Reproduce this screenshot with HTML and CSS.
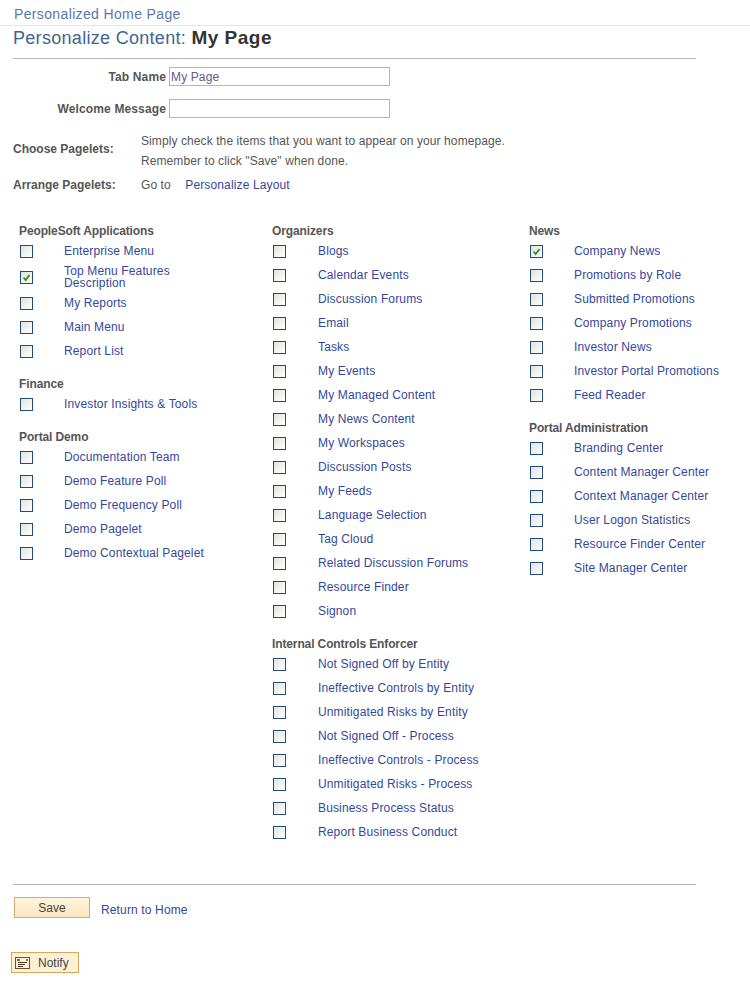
FILE: index.html
```html
<!DOCTYPE html>
<html lang="en">
<head>
    <meta charset="UTF-8">
    <title>Personalize Content</title>
    <link rel="stylesheet" href="styles.css">
</head>
<body>
    <div class="page-bar">Personalized Home Page</div>
    <div class="content">
        <h1 class="title">Personalize Content: <b>My Page</b></h1>
        <hr class="rule rule-top">

        <div class="field field-first">
            <label class="field-label">Tab Name</label>
            <input class="field-input" type="text" value="My Page">
        </div>
        <div class="field">
            <label class="field-label">Welcome Message</label>
            <input class="field-input" type="text">
        </div>

        <div class="info info-choose">
            <div class="info-label">Choose Pagelets:</div>
            <div class="info-text">
                <div>Simply check the items that you want to appear on your homepage.</div>
                <div>Remember to click "Save" when done.</div>
            </div>
        </div>
        <div class="info info-arrange">
            <div class="info-label">Arrange Pagelets:</div>
            <div class="info-text">Go to <a class="link goto-link" href="#">Personalize Layout</a></div>
        </div>
    </div>

    <div class="columns">
        <div class="column col-one">
            <div class="section">
                <div class="section-title">PeopleSoft Applications</div>
                <div class="row"><span class="box"></span><a class="link" href="#">Enterprise Menu</a></div>
                <div class="row row-tall"><span class="box checked"><svg viewBox="0 0 13 13"><path d="M3 6.5 L5.5 9.5 L10 3.5" fill="none" stroke="#2c9a1e" stroke-width="2.2"/></svg></span><a class="link" href="#">Top Menu Features<br>Description</a></div>
                <div class="row"><span class="box"></span><a class="link" href="#">My Reports</a></div>
                <div class="row"><span class="box"></span><a class="link" href="#">Main Menu</a></div>
                <div class="row"><span class="box"></span><a class="link" href="#">Report List</a></div>
            </div>
            <div class="section">
                <div class="section-title">Finance</div>
                <div class="row"><span class="box"></span><a class="link" href="#">Investor Insights &amp; Tools</a></div>
            </div>
            <div class="section">
                <div class="section-title">Portal Demo</div>
                <div class="row"><span class="box"></span><a class="link" href="#">Documentation Team</a></div>
                <div class="row"><span class="box"></span><a class="link" href="#">Demo Feature Poll</a></div>
                <div class="row"><span class="box"></span><a class="link" href="#">Demo Frequency Poll</a></div>
                <div class="row"><span class="box"></span><a class="link" href="#">Demo Pagelet</a></div>
                <div class="row"><span class="box"></span><a class="link" href="#">Demo Contextual Pagelet</a></div>
            </div>
        </div>

        <div class="column col-two">
            <div class="section">
                <div class="section-title">Organizers</div>
                <div class="row"><span class="box"></span><a class="link" href="#">Blogs</a></div>
                <div class="row"><span class="box"></span><a class="link" href="#">Calendar Events</a></div>
                <div class="row"><span class="box"></span><a class="link" href="#">Discussion Forums</a></div>
                <div class="row"><span class="box"></span><a class="link" href="#">Email</a></div>
                <div class="row"><span class="box"></span><a class="link" href="#">Tasks</a></div>
                <div class="row"><span class="box"></span><a class="link" href="#">My Events</a></div>
                <div class="row"><span class="box"></span><a class="link" href="#">My Managed Content</a></div>
                <div class="row"><span class="box"></span><a class="link" href="#">My News Content</a></div>
                <div class="row"><span class="box"></span><a class="link" href="#">My Workspaces</a></div>
                <div class="row"><span class="box"></span><a class="link" href="#">Discussion Posts</a></div>
                <div class="row"><span class="box"></span><a class="link" href="#">My Feeds</a></div>
                <div class="row"><span class="box"></span><a class="link" href="#">Language Selection</a></div>
                <div class="row"><span class="box"></span><a class="link" href="#">Tag Cloud</a></div>
                <div class="row"><span class="box"></span><a class="link" href="#">Related Discussion Forums</a></div>
                <div class="row"><span class="box"></span><a class="link" href="#">Resource Finder</a></div>
                <div class="row"><span class="box"></span><a class="link" href="#">Signon</a></div>
            </div>
            <div class="section">
                <div class="section-title">Internal Controls Enforcer</div>
                <div class="row"><span class="box"></span><a class="link" href="#">Not Signed Off by Entity</a></div>
                <div class="row"><span class="box"></span><a class="link" href="#">Ineffective Controls by Entity</a></div>
                <div class="row"><span class="box"></span><a class="link" href="#">Unmitigated Risks by Entity</a></div>
                <div class="row"><span class="box"></span><a class="link" href="#">Not Signed Off - Process</a></div>
                <div class="row"><span class="box"></span><a class="link" href="#">Ineffective Controls - Process</a></div>
                <div class="row"><span class="box"></span><a class="link" href="#">Unmitigated Risks - Process</a></div>
                <div class="row"><span class="box"></span><a class="link" href="#">Business Process Status</a></div>
                <div class="row"><span class="box"></span><a class="link" href="#">Report Business Conduct</a></div>
            </div>
        </div>

        <div class="column col-three">
            <div class="section">
                <div class="section-title">News</div>
                <div class="row"><span class="box checked"><svg viewBox="0 0 13 13"><path d="M3 6.5 L5.5 9.5 L10 3.5" fill="none" stroke="#2c9a1e" stroke-width="2.2"/></svg></span><a class="link" href="#">Company News</a></div>
                <div class="row"><span class="box"></span><a class="link" href="#">Promotions by Role</a></div>
                <div class="row"><span class="box"></span><a class="link" href="#">Submitted Promotions</a></div>
                <div class="row"><span class="box"></span><a class="link" href="#">Company Promotions</a></div>
                <div class="row"><span class="box"></span><a class="link" href="#">Investor News</a></div>
                <div class="row"><span class="box"></span><a class="link" href="#">Investor Portal Promotions</a></div>
                <div class="row"><span class="box"></span><a class="link" href="#">Feed Reader</a></div>
            </div>
            <div class="section">
                <div class="section-title">Portal Administration</div>
                <div class="row"><span class="box"></span><a class="link" href="#">Branding Center</a></div>
                <div class="row"><span class="box"></span><a class="link" href="#">Content Manager Center</a></div>
                <div class="row"><span class="box"></span><a class="link" href="#">Context Manager Center</a></div>
                <div class="row"><span class="box"></span><a class="link" href="#">User Logon Statistics</a></div>
                <div class="row"><span class="box"></span><a class="link" href="#">Resource Finder Center</a></div>
                <div class="row"><span class="box"></span><a class="link" href="#">Site Manager Center</a></div>
            </div>
        </div>
    </div>

    <div class="content">
        <hr class="rule rule-bottom">
        <div class="actions">
            <button class="btn btn-save">Save</button>
            <a class="link" href="#">Return to Home</a>
        </div>
    </div>

    <button class="btn btn-notify">
        <svg class="notify-icon" viewBox="0 0 15 12">
            <rect x="0.5" y="0.5" width="14" height="11" fill="#fdf3d8" stroke="#7a4a2c"/>
            <rect x="2" y="2" width="3" height="2" fill="#b0503a"/>
            <rect x="11" y="2" width="2" height="2" fill="#5a9a4a"/>
            <path d="M3 5.5 H12 M3 7.5 H10 M3 9.5 H8" stroke="#4a3a2a" fill="none"/>
        </svg>
        Notify
    </button>
</body>
</html>
```

FILE: styles.css
```css
body {
    font-family: "Liberation Sans", Arial, sans-serif;
    font-size: 12px;
    color: #333333;
    background-color: #ffffff;
    margin: 0;
}
.page-bar {
    height: 25px;
    line-height: 28px;
    padding-left: 14px;
    font-size: 14px;
    letter-spacing: 0.36px;
    color: #5a78a8;
    border-bottom: 1px solid #e6e6e6;
}
.content {
    padding-left: 13px;
    width: 683px;
}
.title {
    margin: 0;
    height: 24px;
    line-height: 23px;
    font-size: 18px;
    letter-spacing: 0.3px;
    font-weight: normal;
    color: #3f6593;
}
.title b {
    font-size: 19px;
    letter-spacing: 0.5px;
    color: #333333;
}
.rule {
    margin: 0;
    border: none;
    height: 1px;
    background-color: #b5b5b5;
}
.rule-top {
    margin-top: 8px;
}
.field {
    display: flex;
    align-items: center;
    height: 20px;
    margin-top: 12px;
}
.field-first {
    margin-top: 7px;
}
.field-label {
    width: 153px;
    padding-top: 2px;
    text-align: right;
    font-weight: bold;
    letter-spacing: 0.13px;
    color: #555555;
}
.field-input {
    box-sizing: border-box;
    width: 221px;
    height: 19px;
    margin-left: 3px;
    padding: 2px 1px 0;
    border: 1px solid #b5b5b5;
    font-family: "Liberation Sans", Arial, sans-serif;
    font-size: 12px;
    letter-spacing: 0.13px;
    color: #66598a;
}
.info {
    display: flex;
}
.info-choose {
    align-items: center;
    margin-top: 13px;
}
.info-choose .info-label {
    padding-bottom: 4px;
}
.info-arrange {
    margin-top: 7px;
}
.info-label {
    width: 128px;
    font-weight: bold;
    color: #555555;
}
.info-text {
    line-height: 20px;
    letter-spacing: 0.09px;
    color: #555555;
}
.info-arrange .info-label,
.info-arrange .info-text {
    line-height: 14px;
}
.goto-link {
    margin-left: 11px;
}
.link {
    color: #33489a;
    letter-spacing: 0.14px;
    text-decoration: none;
}
.columns {
    display: flex;
    margin-top: 29px;
    height: 663px;
}
.col-one {
    width: 253px;
    margin-left: 19px;
}
.col-two {
    width: 257px;
}
.col-two .box {
    margin-right: 32px;
}
.section {
    margin-bottom: 11px;
}
.section-title {
    height: 18px;
    line-height: 20px;
    font-weight: bold;
    letter-spacing: -0.12px;
    color: #555555;
}
.row {
    display: flex;
    align-items: center;
    height: 24px;
    line-height: 12px;
}
.row-tall {
    height: 28px;
}
.box {
    box-sizing: border-box;
    flex: none;
    width: 13px;
    height: 13px;
    margin-left: 1px;
    margin-right: 31px;
    border: 1px solid #1f4e7a;
    background: linear-gradient(135deg, #e2e2dc, #ffffff);
}
.box svg {
    display: block;
    width: 11px;
    height: 11px;
}
.actions {
    display: flex;
    align-items: center;
    margin-top: 12px;
    padding-left: 1px;
}
.actions .link {
    margin-left: 11px;
    padding-top: 5px;
}
.btn {
    box-sizing: border-box;
    font-family: "Liberation Sans", Arial, sans-serif;
    font-size: 12px;
    color: #444444;
    background: linear-gradient(#fdf4dc, #fbe6c0);
    padding: 0;
}
.btn-save {
    width: 76px;
    height: 21px;
    border: 1px solid #d9a873;
}
.btn-notify {
    display: flex;
    align-items: center;
    width: 68px;
    height: 21px;
    margin: 34px 0 0 11px;
    padding-left: 3px;
    border: 1px solid #dba85a;
    background: #fdf0d5;
}
.notify-icon {
    width: 15px;
    height: 12px;
    margin-right: 8px;
}
```
